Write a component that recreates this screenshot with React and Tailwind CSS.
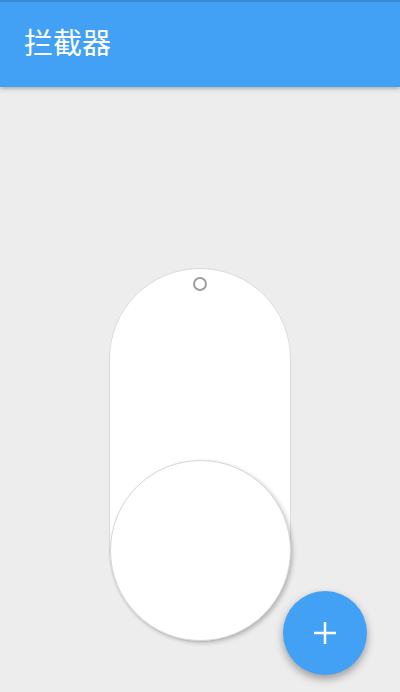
import React from "react";

const App = () => {
  return (
    <div
      className="relative h-[692px] w-full overflow-hidden bg-[#ededed]"
      style={{ fontFamily: '"Noto Sans CJK SC", "Noto Sans", sans-serif' }}
    >
      {/* app bar */}
      <div className="relative z-10 flex h-[87px] items-center border-t-2 border-[#3a8ad9] bg-[#42a1f5] px-6 pb-[6px] shadow-[0_2px_4px_rgba(0,0,0,0.25)]">
        <h1 className="text-[29px] leading-none text-white">拦截器</h1>
      </div>

      {/* switch */}
      <div className="flex justify-center pt-[181px]">
        <div className="flex h-[374px] w-[182px] flex-col items-center justify-between rounded-full border border-[#dcdcdc] bg-white">
          <div className="mt-[8px] h-[14px] w-[14px] rounded-full border-2 border-[#9e9e9e]" />
          <div className="h-[181px] w-[181px] rounded-full border border-[#d6d6d6] bg-white shadow-[2px_2px_4px_rgba(0,0,0,0.22)]" />
        </div>
      </div>

      {/* fab */}
      <button className="absolute bottom-[17px] right-[33px] flex h-[84px] w-[84px] items-center justify-center rounded-full bg-[#42a1f5] shadow-[0_4px_8px_rgba(0,0,0,0.35)]">
        <svg width="24" height="24" viewBox="0 0 24 24" fill="none" stroke="white" strokeWidth="2.5">
          <path d="M12 1v22M1 12h22" />
        </svg>
      </button>
    </div>
  );
};

export default App;
